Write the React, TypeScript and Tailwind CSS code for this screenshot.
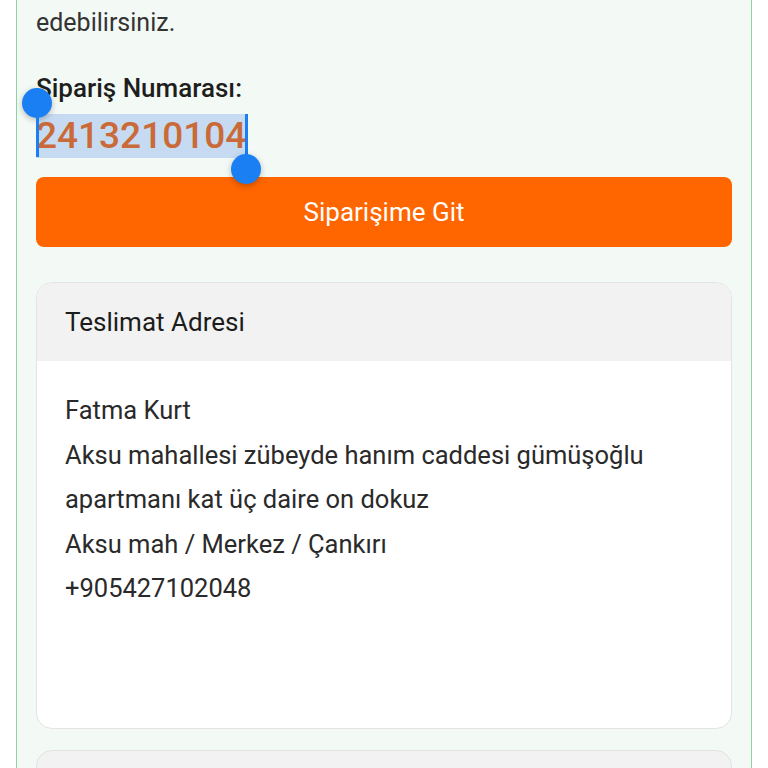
import React from "react";

const ADDRESS_LINES = [
  "Fatma Kurt",
  "Aksu mahallesi zübeyde hanım caddesi gümüşoğlu",
  "apartmanı kat üç daire on dokuz",
  "Aksu mah / Merkez / Çankırı",
  "+905427102048",
];

function SelectionHandles() {
  return (
    <>
      {/* start handle */}
      <div className="pointer-events-none absolute left-[-14px] top-[-26px] flex flex-col items-center">
        <div className="h-[30px] w-[30px] rounded-full bg-[#1a7ff2] shadow-[0_2px_6px_rgba(0,0,0,0.25)]" />
        <div className="-mt-[2px] h-[41px] w-[3px] bg-[#1a7ff2]" />
      </div>
      {/* end handle */}
      <div className="pointer-events-none absolute right-[-15px] top-0 flex flex-col items-center">
        <div className="h-[42px] w-[3px] bg-[#1a7ff2]" />
        <div className="-mt-[2px] h-[30px] w-[30px] rounded-full bg-[#1a7ff2] shadow-[0_2px_6px_rgba(0,0,0,0.25)]" />
      </div>
    </>
  );
}

export default function App() {
  return (
    <div
      className="h-[768px] overflow-hidden bg-white"
      style={{ fontFamily: "Roboto, 'Noto Sans', Arial, sans-serif" }}
    >
      <div className="ml-[16px] w-[736px] border-x border-[#8fd4a0] bg-[#f3f9f4] px-[19px] pb-10">
        <p className="-mt-[31px] text-[25px] leading-[36px] text-[#333]">
          Siparişinizle ilgili gelişmeleri Siparişlerim sayfasından takip edebilirsiniz.
        </p>

        <div className="mt-[31px] text-[26px] font-medium leading-[32px] text-[#1e1e1e]">
          Sipariş Numarası:
        </div>
        <div className="mt-[10px] flex">
          <span className="relative bg-[#c6dbf2] text-[37px] font-medium leading-[44px] text-[#c96a38]">
            2413210104
            <SelectionHandles />
          </span>
        </div>

        <button className="mt-[19px] flex h-[70px] w-full items-center justify-center rounded-[8px] bg-[#ff6600] text-[26px] text-white">
          Siparişime Git
        </button>

        <section className="mt-[35px] overflow-hidden rounded-[16px] border border-[#e3e3e3] bg-white">
          <header className="flex h-[78px] items-center bg-[#f2f2f2] px-[28px] text-[26px] text-[#1c1c1c]">
            Teslimat Adresi
          </header>
          <div className="h-[367px] px-[28px] pt-[27px] text-[25.5px] leading-[44.5px] text-[#2a2a2a]">
            {ADDRESS_LINES.map((line) => (
              <div key={line}>{line}</div>
            ))}
          </div>
        </section>

        <section className="mt-[21px] h-[120px] overflow-hidden rounded-[16px] border border-[#e3e3e3] bg-[#f2f2f2]" />
      </div>
    </div>
  );
}
